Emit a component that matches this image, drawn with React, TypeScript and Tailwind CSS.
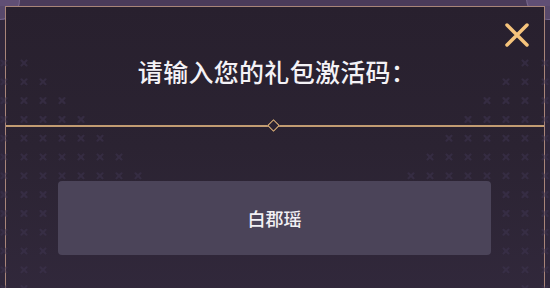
import React from "react";

const leftRows = [1, 2, 3, 4, 5, 6, 7, 2, 2, 2, 2, 2, 1];

function DotPattern() {
  const marks: { x: number; y: number }[] = [];
  leftRows.forEach((count, r) => {
    const y = 63 + r * 18.8;
    for (let c = 0; c < count; c++) {
      marks.push({ x: 24 + c * 19, y });
      marks.push({ x: 525 - c * 19, y });
    }
    marks.push({ x: 4, y });
    marks.push({ x: 545, y });
  });
  return (
    <svg className="absolute inset-0 blur-[0.6px]" width="550" height="288" viewBox="0 0 550 288">
      {marks.map((m, i) => (
        <g key={i} stroke="#3f3550" strokeWidth="2.2" strokeLinecap="round" opacity="0.55">
          <line x1={m.x - 2.5} y1={m.y - 2.5} x2={m.x + 2.5} y2={m.y + 2.5} />
          <line x1={m.x + 2.5} y1={m.y - 2.5} x2={m.x - 2.5} y2={m.y + 2.5} />
        </g>
      ))}
    </svg>
  );
}

export default function App() {
  return (
    <div
      className="relative w-[550px] h-[288px] overflow-hidden bg-[#30273b]"
      style={{ fontFamily: '"Noto Sans CJK SC", "Noto Sans", sans-serif' }}
    >
      <div className="h-[6px] bg-[#4a3b5a]" />

      {/* corner circles */}
      <div className="absolute -left-[20px] -top-[20px] w-[40px] h-[40px] rounded-full bg-[#6a5880]/70 border border-[#8a7aa0]/60" />
      <div className="absolute -right-[20px] -top-[24px] w-[44px] h-[44px] rounded-full bg-[#6a5880]/70 border border-[#8a7aa0]/60" />

      {/* panel */}
      <div className="relative mx-[5px] h-[282px] border-[1.5px] border-b-0 border-[#a88579] bg-gradient-to-b from-[#28202e] via-[#2b2332] to-[#31283b]">
        <div className="absolute -left-[6.5px] -top-[7.5px]">
          <DotPattern />
        </div>

        {/* close */}
        <button className="absolute right-[15px] top-[16px] w-[24px] h-[24px]">
          <svg viewBox="0 0 24 24" width="24" height="24">
            <path d="M2 2 L22 22 M22 2 L2 22" stroke="#f6c47c" strokeWidth="3.5" strokeLinecap="round" />
          </svg>
        </button>

        <div className="relative flex flex-col items-center pt-[48px]">
          <h1 className="text-[25px] leading-[33px] font-medium text-[#f4f2f6] tracking-[0.3px] pl-[4px]">
            请输入您的礼包激活码：
          </h1>

          {/* divider */}
          <div className="relative w-full mt-[37px] h-[2px] bg-[#c29c72]">
            <div className="absolute left-[262.5px] -top-[4px] w-[9px] h-[9px] rotate-45 border-[1.5px] border-[#e8b97c] bg-[#2b2332]" />
          </div>

          <div className="mt-[54px] ml-[-1px] w-[433px] h-[74px] rounded-[4px] bg-[#4b4459] flex items-center justify-center">
            <span className="text-[18px] font-medium text-[#f2f0f4]">白郡瑶</span>
          </div>
        </div>
      </div>
    </div>
  );
}
